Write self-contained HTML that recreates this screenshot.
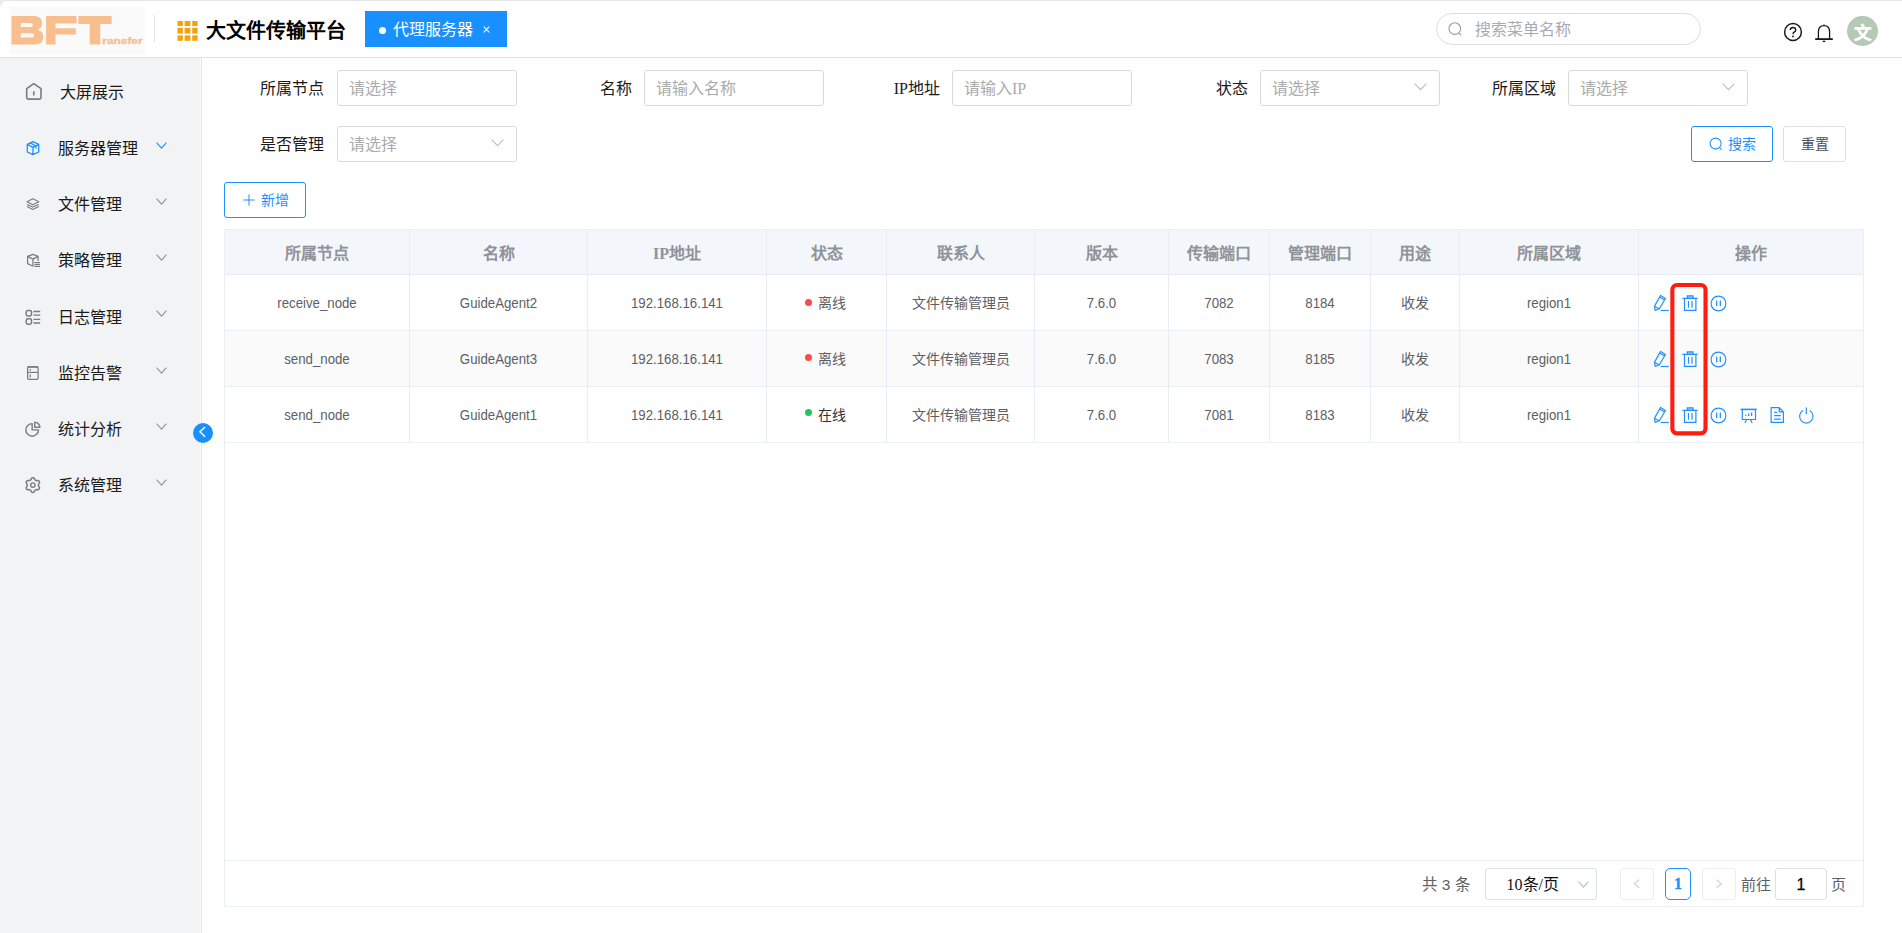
<!DOCTYPE html>
<html lang="zh-CN">
<head>
<meta charset="utf-8">
<title>大文件传输平台</title>
<style>
*{box-sizing:border-box;margin:0;padding:0}
html,body{width:1902px;height:933px;overflow:hidden;background:#fff}
body{position:relative;font-family:"Liberation Sans",sans-serif;color:#303133;font-size:14px}
.abs{position:absolute}
.t{position:absolute;white-space:nowrap;line-height:1}
svg{position:absolute;overflow:visible}
#hdr{position:absolute;left:0;top:0;width:1902px;height:58px;background:#fff;border-bottom:1px solid #e2e2e2;border-top:1px solid #e6e6e6}
#logo{position:absolute;left:10px;top:7px;width:135px;height:47px;background:#fafafa}
#tab{position:absolute;left:365px;top:11px;width:142px;height:36px;background:#1890ff}
#srch{position:absolute;left:1436px;top:13px;width:265px;height:32px;border:1px solid #dcdddf;border-radius:16px;background:#fff}
#side{position:absolute;left:0;top:58px;width:200px;height:875px;background:#f2f3f5}
#sideb{position:absolute;left:200px;top:58px;width:2px;height:875px;background:linear-gradient(90deg,#fcfcfc 0,#fcfcfc 50%,#e4e5e7 50%,#e4e5e7 100%)}
.mi{position:absolute;left:58px;margin-top:1.5px;font-size:16px;line-height:20px;color:#1a1a1a;white-space:nowrap}
.lbl{position:absolute;margin-top:1px;font-size:16px;line-height:20px;color:#1a1a1a;white-space:nowrap;text-align:right;font-family:"Liberation Serif",serif}
.inp{position:absolute;width:180px;height:36px;border:1px solid #d9d9d9;border-radius:3px;background:#fff}
.ph{position:absolute;left:11px;top:8px;font-size:16px;line-height:20px;color:#ababab;white-space:nowrap;font-family:"Liberation Serif",serif}
.btn{position:absolute;height:36px;border:1px solid #dcdfe6;border-radius:3px;background:#fff}
#tbl{position:absolute;left:224px;top:229px;width:1640px;height:678px;border:1px solid #ebeef5}
.hrow{position:absolute;left:0;top:0;width:1638px;height:45px;background:#f3f6fb;border-bottom:1px solid #e9ecf5}
.row{position:absolute;left:0;width:1638px;height:56px;border-bottom:1px solid #ebeef5}
.vl{position:absolute;top:0;width:1px;height:213px;background:#e9ecf5}
.th{position:absolute;top:13.5px;height:20px;line-height:20px;font-size:16px;font-weight:bold;color:#8f9298;text-align:center;white-space:nowrap;font-family:"Liberation Serif",serif}
.td{position:absolute;height:20px;line-height:20px;font-size:14px;color:#5c5f66;text-align:center;white-space:nowrap}
.lat{transform:scaleX(0.945)}
</style>
</head>
<body>
<div id="hdr"></div>
<div id="logo"></div>
<svg style="left:0px;top:0px" width="10" height="10" viewBox="0 0 10 10"><path d="M0,0 H9 A9,9 0 0 0 0,9 Z" fill="#ececec"/></svg>
<svg style="left:0;top:0" width="160" height="58" viewBox="0 0 160 58">
<g fill="#f9be8e">
<path fill-rule="evenodd" d="M11.5,16 H34 Q42,16 42,23.2 Q42,28.6 37.6,29.8 Q43.3,31 43.3,37 Q43.3,44.5 34.5,44.5 H11.5 Z M20.8,23.1 H31 Q32.8,23.1 32.8,25 Q32.8,26.9 31,26.9 H20.8 Z M20.8,33.3 H32 Q34.1,33.3 34.1,35.4 Q34.1,37.5 32,37.5 H20.8 Z"/>
<path d="M46.1,16 H76.5 V23.6 H55.5 V28.2 H75.8 V34.5 H55.5 V44.5 H46.1 Z"/>
<path d="M78.4,16 H111.6 V24 H100.3 V44.5 H89.7 V24 H78.4 Z"/>
<text x="102.3" y="44.4" font-family="Liberation Sans, sans-serif" font-weight="bold" font-size="9.6" stroke="#f9be8e" stroke-width="0.35" transform="translate(102.3 0) scale(1.24 1) translate(-102.3 0)">ransfer</text>
</g></svg>
<div class="abs" style="left:154px;top:15px;width:1px;height:27px;background:#e3e3e3"></div>
<svg style="left:177px;top:21px" width="21" height="20" viewBox="0 0 21 20"><g fill="#f2a30c">
<rect x="0.5" y="0" width="5.4" height="5"/><rect x="7.6" y="0" width="5.8" height="5"/><rect x="15.2" y="0" width="5.4" height="5"/>
<rect x="0.5" y="6.8" width="5.4" height="5.8"/><rect x="7.6" y="6.8" width="5.8" height="5.8"/><rect x="15.2" y="6.8" width="5.4" height="5.8"/>
<rect x="0.5" y="14.4" width="5.4" height="5.4"/><rect x="7.6" y="14.4" width="5.8" height="5.4"/><rect x="15.2" y="14.4" width="5.4" height="5.4"/>
</g></svg>
<div class="t" id="title" style="left:206px;top:19px;font-size:20px;line-height:24px;font-weight:bold;color:#000">大文件传输平台</div>
<div id="tab"></div>
<div class="abs" style="left:379px;top:27px;width:7px;height:7px;border-radius:50%;background:#fff"></div>
<div class="t" id="tabtxt" style="left:393px;top:20px;font-size:16px;line-height:20px;color:#fff">代理服务器</div>
<svg style="left:483px;top:26px" width="7" height="7" viewBox="0 0 7 7"><path d="M0.7,0.7 L6.3,6.3 M6.3,0.7 L0.7,6.3" stroke="#fff" stroke-width="1.1" fill="none"/></svg>
<div id="srch"></div>
<svg style="left:1448px;top:22px" width="15" height="15" viewBox="0 0 15 15"><circle cx="6.8" cy="6.6" r="5.8" stroke="#9a9da3" stroke-width="1.1" fill="none"/><path d="M10.9,10.9 L13.2,13.2" stroke="#9a9da3" stroke-width="1.2"/></svg>
<div class="t" id="srchph" style="left:1475px;top:20px;font-size:16px;line-height:20px;color:#a8abb2">搜索菜单名称</div>
<svg style="left:1783px;top:22px" width="20" height="20" viewBox="0 0 20 20"><circle cx="10" cy="10" r="8.4" stroke="#1a1a1a" stroke-width="1.5" fill="none"/><path d="M7.3,8.1 Q7.3,5.5 10,5.5 Q12.7,5.5 12.7,7.9 Q12.7,9.4 11.2,10.2 Q10,10.9 10,12.2" stroke="#1a1a1a" stroke-width="1.4" fill="none"/><circle cx="10" cy="14.4" r="0.95" fill="#1a1a1a"/></svg>
<svg style="left:1814px;top:22px" width="20" height="21" viewBox="0 0 20 21"><path d="M1.2,17.1 H18.8" stroke="#1a1a1a" stroke-width="1.8" fill="none"/><path d="M4.4,17 V10 Q4.4,3.6 10,3.6 Q15.6,3.6 15.6,10 V17 M10,3.6 V2.6" stroke="#1a1a1a" stroke-width="1.3" fill="none"/><path d="M8.7,19.4 H11.3" stroke="#1a1a1a" stroke-width="1.4"/></svg>
<div class="abs" style="left:1847px;top:15.6px;width:30.8px;height:30.4px;border-radius:50%;background:#b6c9b5"></div>
<div class="t" id="avt" style="left:1851.5px;top:22px;width:21px;text-align:center;font-size:17.5px;line-height:22px;font-weight:bold;color:#fff;-webkit-text-stroke:0.3px #fff">文</div>
<div id="side"></div>
<div id="sideb"></div>
<svg style="left:25px;top:82px" width="18" height="19" viewBox="0 0 18 19"><path d="M1.7,6.7 L8.8,1.7 L16,6.7 V15.5 Q16,17.1 14.4,17.1 H3.3 Q1.7,17.1 1.7,15.5 Z" stroke="#787c85" stroke-width="1.6" fill="none" stroke-linejoin="round"/><path d="M8.8,9.2 V13.6" stroke="#787c85" stroke-width="1.6"/></svg>
<div class="mi" id="m0" style="left:60px;top:81px">大屏展示</div>
<svg style="left:26px;top:141px" width="14" height="15" viewBox="0 0 14 15"><path d="M7,0.7 L12.7,3.3 V11 L7,13.7 L1.3,11 V3.3 Z M1.3,3.3 L7,6.3 L12.7,3.3 M7,6.3 V13.7 M4.1,1.9 L10,5 V7.6" stroke="#1e90ff" stroke-width="1.3" fill="none" stroke-linejoin="round"/></svg>
<svg style="left:26px;top:197px" width="14" height="14" viewBox="0 0 14 14"><path d="M6.8,1.7 L12.8,4.8 L6.8,7.7 L1,4.8 Z M1,7.4 L6.8,10.1 L12.8,7.4 M1,9.6 L6.8,12.5 L12.8,9.6" stroke="#787c85" stroke-width="1.15" fill="none" stroke-linejoin="round"/></svg>
<svg style="left:26px;top:252px" width="15" height="16" viewBox="0 0 15 16"><path d="M6.95,14.2 L1.6,11.6 V4.4 L6.95,2.3 L12.1,4.4 V8.9 M1.6,4.4 L6.95,7.1 L12.1,4.4 M6.95,7.1 V14.6" stroke="#787c85" stroke-width="1.25" fill="none" stroke-linejoin="round"/><path d="M8.4,10.5 H14 M8.4,12.4 H14 M8.4,14.3 H14" stroke="#787c85" stroke-width="1.15"/></svg>
<svg style="left:25px;top:308px" width="17" height="18" viewBox="0 0 17 18"><rect x="1.2" y="2.6" width="5.3" height="5.4" rx="1.7" stroke="#787c85" stroke-width="1.5" fill="none"/><rect x="1.2" y="10.8" width="5.3" height="5.4" rx="1.7" stroke="#787c85" stroke-width="1.5" fill="none"/><path d="M8.4,3.5 H15.2 M8.4,7.1 H15.2 M8.4,11.4 H15.2 M8.4,15 H15.2" stroke="#787c85" stroke-width="1.35"/></svg>
<svg style="left:27px;top:365px" width="13" height="16" viewBox="0 0 13 16"><rect x="0.6" y="1.7" width="10.5" height="12.7" rx="1.3" stroke="#787c85" stroke-width="1.25" fill="none"/><path d="M0.6,2 H11.1" stroke="#787c85" stroke-width="1.6"/><path d="M0.6,7.4 H11.1" stroke="#787c85" stroke-width="1.2"/><path d="M3.2,4 V5.8 M3.2,9.2 V12.6" stroke="#787c85" stroke-width="1.2"/></svg>
<svg style="left:25px;top:420px" width="17" height="18" viewBox="0 0 17 18"><path d="M7.15,3.6 A6.3,6.3 0 1 0 13.45,9.9 H7.15 Z" stroke="#787c85" stroke-width="1.4" fill="none" stroke-linejoin="round"/><path d="M9.7,2.2 A5.2,5.2 0 0 1 14.9,7.3 H9.7 Z" stroke="#787c85" stroke-width="1.4" fill="none" stroke-linejoin="round"/></svg>
<svg style="left:25px;top:476px" width="17" height="18" viewBox="0 0 17 18"><path d="M13.45,9.10 L13.43,8.61 L13.57,8.09 L14.08,7.43 L14.51,6.68 L14.47,6.01 L14.17,5.45 L13.83,4.91 L13.28,4.54 L12.41,4.54 L11.59,4.65 L11.06,4.51 L10.65,4.25 L10.22,4.02 L9.84,3.64 L9.52,2.87 L9.08,2.12 L8.49,1.83 L7.85,1.80 L7.21,1.83 L6.62,2.12 L6.18,2.87 L5.86,3.64 L5.48,4.02 L5.05,4.25 L4.64,4.51 L4.11,4.65 L3.29,4.54 L2.42,4.54 L1.87,4.91 L1.53,5.45 L1.23,6.01 L1.19,6.68 L1.62,7.43 L2.13,8.09 L2.27,8.61 L2.25,9.10 L2.27,9.59 L2.13,10.11 L1.62,10.77 L1.19,11.52 L1.23,12.19 L1.53,12.75 L1.87,13.29 L2.42,13.66 L3.29,13.66 L4.11,13.55 L4.64,13.69 L5.05,13.95 L5.48,14.18 L5.86,14.56 L6.18,15.33 L6.62,16.08 L7.21,16.37 L7.85,16.40 L8.49,16.37 L9.08,16.08 L9.52,15.33 L9.84,14.56 L10.22,14.18 L10.65,13.95 L11.06,13.69 L11.59,13.55 L12.41,13.66 L13.28,13.66 L13.83,13.29 L14.17,12.75 L14.47,12.19 L14.51,11.52 L14.08,10.77 L13.57,10.11 L13.43,9.59 Z" stroke="#787c85" stroke-width="1.5" fill="none" stroke-linejoin="round"/><circle cx="7.85" cy="9.10" r="2.2" stroke="#787c85" stroke-width="1.4" fill="none"/></svg>
<div class="mi" id="m1" style="top:137px">服务器管理</div>
<svg style="left:156.0px;top:141.7px" width="11" height="7" viewBox="0 0 11 7"><path d="M0.6,0.6 L5.5,6.1 L10.4,0.6" stroke="#1e90ff" stroke-width="1.1" fill="none"/></svg>
<div class="mi" id="m2" style="top:193px">文件管理</div>
<svg style="left:156.0px;top:197.7px" width="11" height="7" viewBox="0 0 11 7"><path d="M0.6,0.6 L5.5,6.1 L10.4,0.6" stroke="#8f949e" stroke-width="1.1" fill="none"/></svg>
<div class="mi" id="m3" style="top:249px">策略管理</div>
<svg style="left:156.0px;top:253.7px" width="11" height="7" viewBox="0 0 11 7"><path d="M0.6,0.6 L5.5,6.1 L10.4,0.6" stroke="#8f949e" stroke-width="1.1" fill="none"/></svg>
<div class="mi" id="m4" style="top:306px">日志管理</div>
<svg style="left:156.0px;top:309.7px" width="11" height="7" viewBox="0 0 11 7"><path d="M0.6,0.6 L5.5,6.1 L10.4,0.6" stroke="#8f949e" stroke-width="1.1" fill="none"/></svg>
<div class="mi" id="m5" style="top:362px">监控告警</div>
<svg style="left:156.0px;top:366.7px" width="11" height="7" viewBox="0 0 11 7"><path d="M0.6,0.6 L5.5,6.1 L10.4,0.6" stroke="#8f949e" stroke-width="1.1" fill="none"/></svg>
<div class="mi" id="m6" style="top:418px">统计分析</div>
<svg style="left:156.0px;top:422.7px" width="11" height="7" viewBox="0 0 11 7"><path d="M0.6,0.6 L5.5,6.1 L10.4,0.6" stroke="#8f949e" stroke-width="1.1" fill="none"/></svg>
<div class="mi" id="m7" style="top:474px">系统管理</div>
<svg style="left:156.0px;top:478.7px" width="11" height="7" viewBox="0 0 11 7"><path d="M0.6,0.6 L5.5,6.1 L10.4,0.6" stroke="#8f949e" stroke-width="1.1" fill="none"/></svg>
<div class="abs" style="left:193px;top:423px;width:20px;height:20px;border-radius:50%;background:#1890ff"></div>
<svg style="left:198px;top:426px" width="9" height="12" viewBox="0 0 9 12"><path d="M7.1,0.9 L1.9,5.8 L7.1,10.8" stroke="#fff" stroke-width="1.4" fill="none"/></svg>
<div class="lbl" id="l0" style="left:204px;width:120px;top:78px">所属节点</div>
<div class="lbl" id="l1" style="left:512px;width:120px;top:78px">名称</div>
<div class="lbl" id="l2" style="left:820px;width:120px;top:78px">IP地址</div>
<div class="lbl" id="l3" style="left:1128px;width:120px;top:78px">状态</div>
<div class="lbl" id="l4" style="left:1436px;width:120px;top:78px">所属区域</div>
<div class="lbl" id="l5" style="left:204px;width:120px;top:134px">是否管理</div>
<div class="inp" style="left:337px;top:70px"><div class="ph" id="p0">请选择</div></div>
<div class="inp" style="left:644px;top:70px"><div class="ph" id="p1">请输入名称</div></div>
<div class="inp" style="left:952px;top:70px"><div class="ph" id="p2">请输入IP</div></div>
<div class="inp" style="left:1260px;top:70px"><div class="ph" id="p3">请选择</div></div>
<svg style="left:1413.5px;top:82.60000000000001px" width="13" height="7.6" viewBox="0 0 13 7.6"><path d="M0.6,0.6 L6.5,6.699999999999999 L12.4,0.6" stroke="#bdbdbd" stroke-width="1.1" fill="none"/></svg>
<div class="inp" style="left:1568px;top:70px"><div class="ph" id="p4">请选择</div></div>
<svg style="left:1721.5px;top:82.60000000000001px" width="13" height="7.6" viewBox="0 0 13 7.6"><path d="M0.6,0.6 L6.5,6.699999999999999 L12.4,0.6" stroke="#bdbdbd" stroke-width="1.1" fill="none"/></svg>
<div class="inp" style="left:337px;top:126px"><div class="ph" id="p5">请选择</div></div>
<svg style="left:490.5px;top:138.6px" width="13" height="7.6" viewBox="0 0 13 7.6"><path d="M0.6,0.6 L6.5,6.699999999999999 L12.4,0.6" stroke="#bdbdbd" stroke-width="1.1" fill="none"/></svg>
<div class="btn" style="left:1691px;top:126px;width:82px;border-color:#1f90ff"></div>
<svg style="left:1709px;top:137px" width="14" height="14" viewBox="0 0 14 14"><circle cx="6.6" cy="6.6" r="5.5" stroke="#1f90ff" stroke-width="1.05" fill="none"/><path d="M10.5,10.5 L12.6,12.6" stroke="#1f90ff" stroke-width="1.05"/></svg>
<div class="t" id="bsearch" style="left:1728px;top:135px;font-size:14px;line-height:18px;color:#1f90ff">搜索</div>
<div class="btn" style="left:1783px;top:126px;width:63px"></div>
<div class="t" id="breset" style="left:1801px;top:135px;font-size:14px;line-height:18px;color:#4a4d52">重置</div>
<div class="btn" style="left:224px;top:182px;width:82px;border-color:#1f90ff"></div>
<svg style="left:243px;top:194px" width="12" height="12" viewBox="0 0 12 12"><path d="M6,0.3 V11.7 M0.3,6 H11.7" stroke="#1f90ff" stroke-width="1"/></svg>
<div class="t" id="badd" style="left:261px;top:191px;font-size:14px;line-height:18px;color:#1f90ff">新增</div>
<div id="tbl">
<div class="hrow"></div>
<div class="row" style="top:45px"></div>
<div class="row" style="top:101px;background:#fafafa"></div>
<div class="row" style="top:157px"></div>
<div class="vl" style="left:184px"></div>
<div class="vl" style="left:362px"></div>
<div class="vl" style="left:541px"></div>
<div class="vl" style="left:661px"></div>
<div class="vl" style="left:809px"></div>
<div class="vl" style="left:943px"></div>
<div class="vl" style="left:1044px"></div>
<div class="vl" style="left:1145px"></div>
<div class="vl" style="left:1234px"></div>
<div class="vl" style="left:1413px"></div>
<div class="th" id="h0" style="left:0px;width:184px">所属节点</div>
<div class="th" id="h1" style="left:185px;width:177px">名称</div>
<div class="th" id="h2" style="left:363px;width:178px">IP地址</div>
<div class="th" id="h3" style="left:542px;width:119px">状态</div>
<div class="th" id="h4" style="left:662px;width:147px">联系人</div>
<div class="th" id="h5" style="left:810px;width:133px">版本</div>
<div class="th" id="h6" style="left:944px;width:100px">传输端口</div>
<div class="th" id="h7" style="left:1045px;width:100px">管理端口</div>
<div class="th" id="h8" style="left:1146px;width:88px">用途</div>
<div class="th" id="h9" style="left:1235px;width:178px">所属区域</div>
<div class="th" id="h10" style="left:1414px;width:224px">操作</div>
<div class="td lat" id="c0_0" style="left:0px;width:184px;top:63px">receive_node</div>
<div class="td lat" id="c0_1" style="left:185px;width:177px;top:63px">GuideAgent2</div>
<div class="td lat" id="c0_2" style="left:363px;width:178px;top:63px">192.168.16.141</div>
<div class="abs" style="left:580px;top:68.5px;width:7px;height:7px;border-radius:50%;background:#fb4a4e"></div>
<div class="td" id="c0_3" style="left:593px;top:63px;color:#5c5f66">离线</div>
<div class="td" id="c0_4" style="left:662px;width:147px;top:63px">文件传输管理员</div>
<div class="td lat" id="c0_5" style="left:810px;width:133px;top:63px">7.6.0</div>
<div class="td lat" id="c0_6" style="left:944px;width:100px;top:63px">7082</div>
<div class="td lat" id="c0_7" style="left:1045px;width:100px;top:63px">8184</div>
<div class="td" id="c0_8" style="left:1146px;width:88px;top:63px">收发</div>
<div class="td lat" id="c0_9" style="left:1235px;width:178px;top:63px">region1</div>
<div class="td lat" id="c1_0" style="left:0px;width:184px;top:119px">send_node</div>
<div class="td lat" id="c1_1" style="left:185px;width:177px;top:119px">GuideAgent3</div>
<div class="td lat" id="c1_2" style="left:363px;width:178px;top:119px">192.168.16.141</div>
<div class="abs" style="left:580px;top:124.0px;width:7px;height:7px;border-radius:50%;background:#fb4a4e"></div>
<div class="td" id="c1_3" style="left:593px;top:119px;color:#5c5f66">离线</div>
<div class="td" id="c1_4" style="left:662px;width:147px;top:119px">文件传输管理员</div>
<div class="td lat" id="c1_5" style="left:810px;width:133px;top:119px">7.6.0</div>
<div class="td lat" id="c1_6" style="left:944px;width:100px;top:119px">7083</div>
<div class="td lat" id="c1_7" style="left:1045px;width:100px;top:119px">8185</div>
<div class="td" id="c1_8" style="left:1146px;width:88px;top:119px">收发</div>
<div class="td lat" id="c1_9" style="left:1235px;width:178px;top:119px">region1</div>
<div class="td lat" id="c2_0" style="left:0px;width:184px;top:175px">send_node</div>
<div class="td lat" id="c2_1" style="left:185px;width:177px;top:175px">GuideAgent1</div>
<div class="td lat" id="c2_2" style="left:363px;width:178px;top:175px">192.168.16.141</div>
<div class="abs" style="left:580px;top:179.0px;width:7px;height:7px;border-radius:50%;background:#1cc760"></div>
<div class="td" id="c2_3" style="left:593px;top:175px;color:#303133">在线</div>
<div class="td" id="c2_4" style="left:662px;width:147px;top:175px">文件传输管理员</div>
<div class="td lat" id="c2_5" style="left:810px;width:133px;top:175px">7.6.0</div>
<div class="td lat" id="c2_6" style="left:944px;width:100px;top:175px">7081</div>
<div class="td lat" id="c2_7" style="left:1045px;width:100px;top:175px">8183</div>
<div class="td" id="c2_8" style="left:1146px;width:88px;top:175px">收发</div>
<div class="td lat" id="c2_9" style="left:1235px;width:178px;top:175px">region1</div>
<svg style="left:1428px;top:65px" width="17" height="17" viewBox="0 0 17 17"><path d="M7.6,0.4 L12.5,3.4 L6.4,13.8 L2.2,15.4 L1.4,11.4 Z M6.7,2 L11.6,5 M1.4,11.4 L6.4,13.8" stroke="#1f90ff" stroke-width="1.15" fill="none" stroke-linejoin="round"/><path d="M7.6,15.5 H15.8" stroke="#1f90ff" stroke-width="1.15"/></svg>
<svg style="left:1457px;top:65px" width="16" height="16" viewBox="0 0 16 16"><path d="M0.3,3.4 H15.7 M5.3,3.4 V0.8 H11 V3.4 M2.5,3.4 V15.3 H13.9 V3.4 M6.5,6 V12.8 M10,6 V12.8" stroke="#1f90ff" stroke-width="1.2" fill="none"/><rect x="5.3" y="0.8" width="5.7" height="2.6" fill="#1f90ff" opacity="0.45"/></svg>
<svg style="left:1485.4px;top:64.69999999999999px" width="17" height="17" viewBox="0 0 17 17"><circle cx="8.5" cy="8.5" r="7.4" stroke="#1f90ff" stroke-width="1.15" fill="none"/><path d="M6.7,5.6 V11.3 M10.3,5.6 V11.3" stroke="#1f90ff" stroke-width="1.25"/></svg>
<svg style="left:1428px;top:121px" width="17" height="17" viewBox="0 0 17 17"><path d="M7.6,0.4 L12.5,3.4 L6.4,13.8 L2.2,15.4 L1.4,11.4 Z M6.7,2 L11.6,5 M1.4,11.4 L6.4,13.8" stroke="#1f90ff" stroke-width="1.15" fill="none" stroke-linejoin="round"/><path d="M7.6,15.5 H15.8" stroke="#1f90ff" stroke-width="1.15"/></svg>
<svg style="left:1457px;top:121px" width="16" height="16" viewBox="0 0 16 16"><path d="M0.3,3.4 H15.7 M5.3,3.4 V0.8 H11 V3.4 M2.5,3.4 V15.3 H13.9 V3.4 M6.5,6 V12.8 M10,6 V12.8" stroke="#1f90ff" stroke-width="1.2" fill="none"/><rect x="5.3" y="0.8" width="5.7" height="2.6" fill="#1f90ff" opacity="0.45"/></svg>
<svg style="left:1485.4px;top:120.69999999999999px" width="17" height="17" viewBox="0 0 17 17"><circle cx="8.5" cy="8.5" r="7.4" stroke="#1f90ff" stroke-width="1.15" fill="none"/><path d="M6.7,5.6 V11.3 M10.3,5.6 V11.3" stroke="#1f90ff" stroke-width="1.25"/></svg>
<svg style="left:1428px;top:177px" width="17" height="17" viewBox="0 0 17 17"><path d="M7.6,0.4 L12.5,3.4 L6.4,13.8 L2.2,15.4 L1.4,11.4 Z M6.7,2 L11.6,5 M1.4,11.4 L6.4,13.8" stroke="#1f90ff" stroke-width="1.15" fill="none" stroke-linejoin="round"/><path d="M7.6,15.5 H15.8" stroke="#1f90ff" stroke-width="1.15"/></svg>
<svg style="left:1457px;top:177px" width="16" height="16" viewBox="0 0 16 16"><path d="M0.3,3.4 H15.7 M5.3,3.4 V0.8 H11 V3.4 M2.5,3.4 V15.3 H13.9 V3.4 M6.5,6 V12.8 M10,6 V12.8" stroke="#1f90ff" stroke-width="1.2" fill="none"/><rect x="5.3" y="0.8" width="5.7" height="2.6" fill="#1f90ff" opacity="0.45"/></svg>
<svg style="left:1485.4px;top:176.7px" width="17" height="17" viewBox="0 0 17 17"><circle cx="8.5" cy="8.5" r="7.4" stroke="#1f90ff" stroke-width="1.15" fill="none"/><path d="M6.7,5.6 V11.3 M10.3,5.6 V11.3" stroke="#1f90ff" stroke-width="1.25"/></svg>
<svg style="left:1514.5px;top:177.60000000000002px" width="17" height="16" viewBox="0 0 17 16"><path d="M0.6,1.4 H16.7" stroke="#1f90ff" stroke-width="1.6"/><path d="M2.3,1.4 V11.5 H15.5 V1.4 M6.6,11.5 L4.9,15 M10.4,11.5 L12.1,15" stroke="#1f90ff" stroke-width="1.2" fill="none"/><path d="M5.9,6.7 V8.1 M8.7,5.5 V8.1 M11.6,4.5 V8.1" stroke="#1f90ff" stroke-width="1.3"/></svg>
<svg style="left:1544.5px;top:177px" width="15" height="16" viewBox="0 0 15 16"><path d="M1.1,0.7 H9.2 L13.4,4.9 V15.4 H1.1 Z M9.2,0.7 V4.9 H13.4" stroke="#1f90ff" stroke-width="1.2" fill="none" stroke-linejoin="round"/><path d="M4.2,5.3 H7.2 M4.2,8.7 H10.8 M4.2,12.2 H10.8" stroke="#1f90ff" stroke-width="1.2"/></svg>
<svg style="left:1573px;top:176.7px" width="17" height="17" viewBox="0 0 17 17"><path d="M4.9,3.6 A6.7,6.7 0 1 0 11.7,3.6" stroke="#1f90ff" stroke-width="1.15" fill="none"/><path d="M8.3,0.5 V7.2" stroke="#1f90ff" stroke-width="1.2"/></svg>
<div class="abs" style="left:0;top:630px;width:1638px;height:1px;background:#ebeef5"></div>
</div>
<svg style="left:0px;top:0px" width="1902" height="933" viewBox="0 0 1902 933"><rect x="1672.35" y="285.05" width="33.15" height="148.3" rx="4.5" ry="4.5" stroke="#ff1d10" stroke-width="4.1" fill="none"/></svg>
<div class="t" id="ptotal" style="left:1421.5px;top:875px;font-size:15.5px;line-height:20px;color:#5c5f66">共 3 条</div>
<div class="abs" style="left:1485px;top:868px;width:112px;height:32px;border:1px solid #dcdfe6;border-radius:3px"></div>
<div class="t" id="psize" style="left:1506.5px;top:875px;font-size:16px;line-height:20px;color:#111;font-family:'Liberation Serif',serif;">10条/页</div>
<svg style="left:1578.0px;top:881.0px" width="11" height="7" viewBox="0 0 11 7"><path d="M0.6,0.6 L5.5,6.1 L10.4,0.6" stroke="#b9bdc5" stroke-width="1.1" fill="none"/></svg>
<div class="abs" style="left:1620px;top:868px;width:34px;height:32px;border:1px solid #ebedf3;border-radius:3px"></div>
<svg style="left:1632.5px;top:879.2px" width="8" height="10" viewBox="0 0 8 10"><path d="M6.2,0.6 L1.3,4.7 L6.2,8.8" stroke="#d6dae3" stroke-width="1.5" fill="none"/></svg>
<div class="abs" style="left:1665px;top:868px;width:26px;height:32px;border:1px solid #1f90ff;border-radius:5px"></div>
<div class="t" id="pcur" style="left:1665px;width:26px;text-align:center;top:874px;font-size:16px;line-height:20px;font-weight:bold;color:#1f90ff;-webkit-text-stroke:0.35px #1f90ff;font-family:'Liberation Serif',serif;">1</div>
<div class="abs" style="left:1702px;top:868px;width:34px;height:32px;border:1px solid #ebedf3;border-radius:3px"></div>
<svg style="left:1715.2px;top:879.2px" width="8" height="10" viewBox="0 0 8 10"><path d="M1.4,0.6 L6.3,4.7 L1.4,8.8" stroke="#d6dae3" stroke-width="1.5" fill="none"/></svg>
<div class="t" id="pgo" style="left:1741px;top:874.5px;font-size:15px;line-height:20px;color:#5c5f66;font-family:'Liberation Serif',serif;">前往</div>
<div class="abs" style="left:1775px;top:868px;width:52px;height:32px;border:1px solid #dcdfe6;border-radius:3px"></div>
<div class="t" id="pin" style="left:1775px;width:52px;text-align:center;top:875px;font-size:16px;line-height:20px;color:#000;-webkit-text-stroke:0.25px #000">1</div>
<div class="t" id="ppage" style="left:1830.5px;top:874.5px;font-size:15px;line-height:20px;color:#5c5f66;font-family:'Liberation Serif',serif;">页</div>
</body>
</html>
